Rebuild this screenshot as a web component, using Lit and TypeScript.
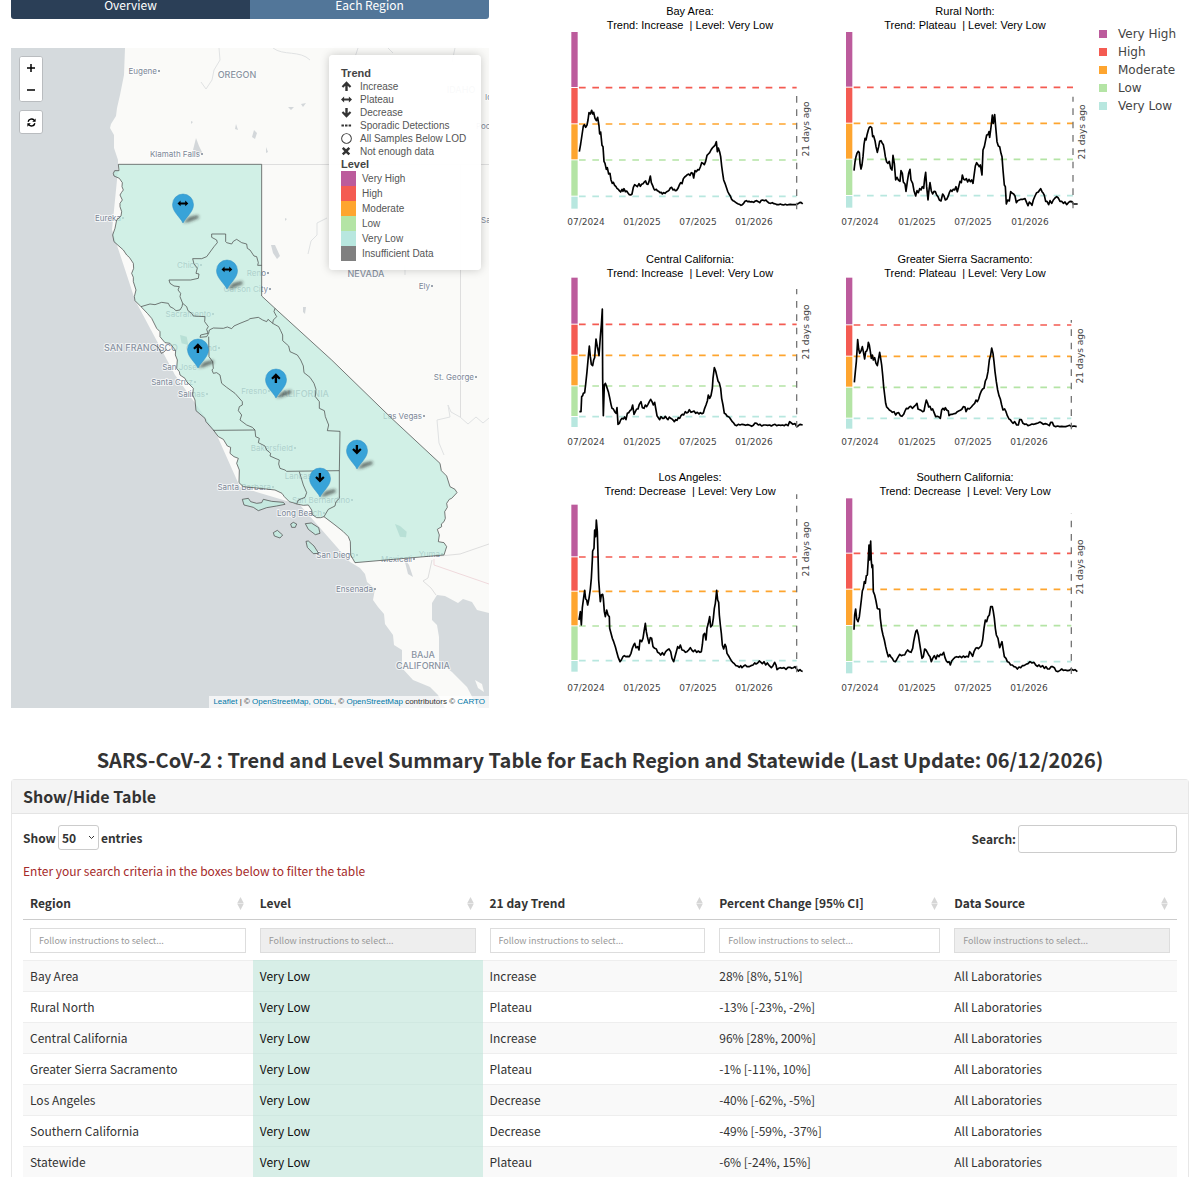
import { LitElement, html, svg, css } from "lit";
import { customElement, property } from "lit/decorators.js";
import { classMap } from "lit/directives/class-map.js";

interface Level {
  name: string;
  color: string;
}

const LEVELS: Level[] = [
  { name: "Very High", color: "#bc5b9c" },
  { name: "High", color: "#f45b52" },
  { name: "Moderate", color: "#fea52f" },
  { name: "Low", color: "#b4e4a5" },
  { name: "Very Low", color: "#b8e7df" },
];

interface Chart {
  title: string;
  trend: string;
  height: number;
  /* Offset of the plot units (a third of a pixel) inside the drawing. */
  dx: number;
  dy: number;
  /* Top, the four thresholds and the bottom of the level bar. */
  bands: number[];
  barX: number;
  lineX: number;
  lineTop: number;
  noteY: number;
  ticksY: number;
  ticks: number[];
  trace: string;
}

const CHARTS: Chart[] = [
  {
    title: "Bay Area", trend: "Increase", height: 200, dx: -5, dy: -32,
    bands: [95, 263, 372, 480, 589, 628], barX: 34, lineX: 710, lineTop: 270, noteY: 388, ticksY: 665,
    ticks: [77, 246, 413, 583],
    trace: "58,455 62,432 66,405 70,378 73,374 77,382 81,375 84,360 87,338 91,342 95,331 98,342 101,337 105,355 109,362 113,352 117,378 119,402 122,396 126,436 129,440 132,484 135,490 139,508 142,503 146,522 150,520 153,540 157,550 160,547 164,556 168,560 171,565 175,568 178,572 182,576 186,568 189,574 192,566 196,575 200,573 204,579 208,584 212,585 216,582 220,562 224,554 228,557 232,560 237,551 241,559 245,553 249,551 253,546 257,543 260,552 264,553 267,545 271,528 274,548 278,557 281,565 284,570 289,568 292,572 296,574 300,578 304,577 307,582 311,578 315,580 319,576 323,574 327,571 331,564 335,562 339,570 343,568 346,572 350,571 354,565 358,555 362,548 366,551 370,536 374,531 378,528 382,524 386,522 390,526 394,518 398,520 401,534 405,512 409,515 413,509 417,510 421,501 425,488 429,490 433,494 437,484 441,466 445,462 449,458 453,450 457,444 461,440 465,436 469,425 472,455 475,444 479,456 482,470 485,498 488,520 491,540 495,550 499,562 503,574 507,582 511,588 515,598 519,602 523,604 527,607 531,610 535,612 539,613 543,616 547,614 551,610 555,604 559,602 563,605 567,604 571,606 576,605 581,607 586,603 590,602 595,605 599,608 604,601 608,600 613,602 618,600 622,605 627,609 632,610 637,608 642,611 647,612 651,614 656,614 661,612 666,614 671,615 676,613 681,615 686,614 691,613 696,614 701,614 706,614 711,613 716,610 720,607 724,608 728,612",
  },
  {
    title: "Rural North", trend: "Plateau", height: 200, dx: -10, dy: -32,
    bands: [95, 262, 370, 478, 587, 625], barX: 48, lineX: 729, lineTop: 290, noteY: 396, ticksY: 665,
    ticks: [91, 262, 430, 601],
    trace: "72,512 75,486 78,470 81,460 85,454 88,458 90,490 93,507 96,495 99,470 102,434 105,415 108,420 111,405 115,390 118,382 121,380 125,383 128,410 131,408 135,422 138,440 142,457 146,440 149,424 153,422 156,428 160,434 163,450 166,470 170,486 174,490 178,484 182,505 186,510 189,466 193,490 197,540 201,532 205,540 210,544 213,512 217,520 220,546 225,552 228,574 232,545 236,520 240,508 243,540 248,550 252,572 257,588 261,572 265,578 269,566 273,570 277,560 281,565 284,536 287,517 290,560 294,600 297,570 300,548 304,573 308,582 312,574 316,575 320,585 324,590 328,600 333,603 338,582 342,588 346,600 350,598 354,590 358,578 362,570 366,574 370,568 374,570 378,560 382,575 386,560 390,544 394,548 397,525 401,538 405,540 409,536 413,546 417,538 421,545 425,540 429,550 433,520 436,498 440,488 444,494 448,500 451,495 456,525 459,450 463,440 466,425 470,405 474,404 477,395 479,412 482,390 485,365 487,345 490,370 494,344 497,380 501,425 505,438 509,440 513,460 516,470 519,510 523,555 526,560 529,612 533,600 538,603 542,575 547,580 551,582 555,588 559,608 563,602 568,600 573,598 579,598 585,596 590,608 594,617 598,606 602,610 606,616 610,600 615,588 620,578 625,576 629,570 632,566 636,575 640,580 643,586 647,604 651,604 656,614 660,602 665,610 670,600 675,594 680,590 685,594 690,604 695,604 700,610 705,606 710,614 715,608 720,604 726,605 730,612 735,612 743,612",
  },
  {
    title: "Central California", trend: "Increase", height: 170, dx: -5, dy: -35,
    bands: [97, 238, 331, 423, 515, 548], barX: 34, lineX: 710, lineTop: 132, noteY: 260, ticksY: 590,
    ticks: [77, 246, 413, 583],
    trace: "58,500 63,500 65,455 68,452 70,445 74,443 77,418 81,380 85,335 88,303 91,335 94,358 98,362 101,345 104,338 108,282 112,305 115,320 117,332 121,275 124,240 127,192 128,400 130,512 133,420 136,415 140,425 145,440 149,458 153,478 156,490 160,492 164,500 168,505 171,488 174,538 178,535 182,525 186,520 190,522 194,516 198,524 202,505 206,503 210,497 214,494 218,480 222,508 226,500 230,492 234,492 238,478 243,470 247,488 252,490 256,480 260,485 264,478 268,470 272,463 276,470 280,480 284,472 288,495 291,512 295,518 299,524 303,515 308,520 312,520 316,514 320,520 324,524 328,516 332,520 336,522 340,526 343,530 347,524 351,526 355,518 359,520 363,512 367,508 371,510 376,500 380,504 384,502 388,494 393,502 397,500 402,498 407,505 412,502 417,507 421,503 426,506 430,504 434,490 438,480 442,468 445,450 449,460 453,452 457,430 459,400 463,368 467,378 471,395 474,408 478,414 482,430 485,460 489,480 493,505 497,507 501,513 505,515 509,518 513,524 517,530 521,534 525,540 530,542 535,538 540,540 546,538 551,539 557,541 563,539 569,541 575,544 580,541 585,534 590,535 595,540 600,538 605,543 611,540 617,540 623,541 629,540 634,543 639,540 645,538 650,542 656,540 662,541 668,540 673,542 678,538 684,542 689,530 694,534 699,538 705,536 710,545 715,542 720,538 728,540",
  },
  {
    title: "Greater Sierra Sacramento", trend: "Plateau", height: 170, dx: -10, dy: -35,
    bands: [97, 240, 334, 427, 520, 553], barX: 48, lineX: 724, lineTop: 225, noteY: 334, ticksY: 590,
    ticks: [91, 260, 428, 597],
    trace: "73,412 76,380 79,350 81,318 83,284 86,312 89,325 93,318 97,305 100,320 104,342 107,320 110,318 113,310 115,292 118,300 121,320 124,340 127,330 130,345 134,338 138,355 142,362 145,345 149,322 152,340 155,360 158,390 161,425 164,450 167,475 170,486 174,490 178,495 183,498 187,502 192,500 197,510 201,504 206,503 211,512 216,514 221,508 225,498 229,490 234,491 238,486 242,484 247,490 252,485 257,480 261,475 264,492 269,494 273,496 278,500 282,498 285,482 289,465 293,475 296,486 300,484 304,495 308,492 312,502 317,515 322,514 327,516 331,520 335,495 339,490 343,495 346,488 350,495 355,498 357,512 362,508 367,508 372,506 377,505 382,500 386,498 391,496 396,492 400,485 405,486 408,500 413,490 418,492 424,486 429,480 434,475 438,465 442,470 446,462 450,448 454,438 458,432 462,430 466,408 470,400 474,380 478,345 482,330 485,309 489,325 492,350 495,380 499,410 503,435 507,452 511,462 515,480 519,495 524,492 528,500 532,512 537,522 541,524 545,530 549,535 554,530 560,540 565,540 569,524 574,524 579,535 584,538 589,537 594,542 600,540 606,537 612,538 618,536 624,534 630,531 635,534 640,538 646,536 652,538 658,542 662,532 667,532 671,542 677,545 683,543 689,545 695,544 701,545 707,545 713,543 719,541 724,545 732,543 740,545",
  },
  {
    title: "Los Angeles", trend: "Decrease", height: 200, dx: -5, dy: -33,
    bands: [118, 276, 379, 483, 587, 622], barX: 34, lineX: 710, lineTop: 88, noteY: 253, ticksY: 668,
    ticks: [77, 246, 413, 583],
    trace: "57,465 61,440 64,480 67,428 70,405 72,390 74,376 77,402 80,405 83,420 87,400 91,372 94,340 97,285 98,258 102,250 104,195 107,215 109,165 112,200 114,270 116,345 119,385 121,410 124,390 128,388 130,400 133,440 136,455 140,435 144,450 148,455 149,490 153,505 157,520 161,530 166,545 170,560 175,578 180,590 184,585 189,575 193,572 198,575 203,574 208,575 213,565 217,550 221,540 224,535 228,548 233,545 237,555 240,525 245,530 249,520 252,500 256,475 259,500 262,515 267,535 271,518 275,520 279,545 284,550 289,552 293,562 298,565 302,570 307,563 312,570 317,560 322,555 327,552 332,560 336,580 341,590 345,575 349,560 353,545 357,550 361,540 366,555 371,556 376,562 381,560 386,555 391,548 396,556 400,560 405,555 410,562 415,558 420,562 424,560 427,540 430,510 434,505 438,525 441,490 445,475 449,455 452,486 457,480 460,460 463,430 466,415 470,376 473,405 476,412 478,450 481,480 484,505 487,540 491,552 495,538 498,545 501,565 506,573 510,580 514,587 518,592 523,596 528,602 533,603 538,607 542,602 546,608 551,603 556,600 561,605 567,605 573,602 579,600 584,594 588,597 593,594 598,588 603,592 607,596 612,590 617,600 622,594 628,602 634,608 639,602 644,592 648,600 651,614 656,610 661,608 666,610 672,608 678,613 684,607 690,607 695,610 700,608 705,605 710,612 715,618 720,614 724,618 728,619",
  },
  {
    title: "Southern California", trend: "Decrease", height: 200, dx: -10, dy: -33,
    bands: [99, 265, 373, 482, 590, 627], barX: 48, lineX: 724, lineTop: 146, noteY: 306, ticksY: 668,
    ticks: [91, 260, 428, 597],
    trace: "72,494 74,450 77,432 80,462 84,470 88,455 91,430 94,405 97,378 100,370 103,350 106,355 109,332 112,330 115,280 117,240 119,285 122,228 124,290 126,308 128,300 130,380 134,390 138,408 142,430 145,432 149,432 151,460 155,492 159,510 163,525 167,545 171,562 175,575 179,569 183,576 187,580 191,588 196,590 200,584 205,575 209,568 214,572 219,570 224,570 229,560 233,555 238,560 243,562 248,550 251,530 255,510 258,498 261,495 265,510 268,530 272,555 276,580 280,575 284,552 288,555 292,562 296,570 300,575 304,590 308,580 313,572 318,582 322,570 327,575 331,568 336,570 341,562 345,578 349,588 353,592 357,590 361,600 365,588 370,582 375,577 380,575 385,577 390,574 395,578 400,573 405,577 410,574 415,576 419,560 423,565 428,574 432,560 437,550 441,548 445,551 450,546 454,542 458,525 462,490 466,465 470,470 474,455 478,450 482,425 487,425 490,440 493,460 496,490 499,510 504,520 509,548 512,540 516,530 519,550 523,575 528,580 532,590 537,592 542,600 547,600 552,605 557,606 562,612 567,606 572,608 577,602 582,602 588,598 594,596 600,590 606,594 612,592 617,600 622,604 627,600 632,606 638,602 643,610 648,605 653,612 658,612 663,605 668,605 673,608 678,618 684,620 690,616 695,612 700,616 706,615 712,617 718,616 724,612 730,616 735,614 742,620",
  },
];

interface Row {
  region: string;
  level: string;
  trend: string;
  change: string;
  source: string;
}

const ROWS: Row[] = [
  { region: "Bay Area", level: "Very Low", trend: "Increase", change: "28% [8%, 51%]", source: "All Laboratories" },
  { region: "Rural North", level: "Very Low", trend: "Plateau", change: "-13% [-23%, -2%]", source: "All Laboratories" },
  { region: "Central California", level: "Very Low", trend: "Increase", change: "96% [28%, 200%]", source: "All Laboratories" },
  { region: "Greater Sierra Sacramento", level: "Very Low", trend: "Plateau", change: "-1% [-11%, 10%]", source: "All Laboratories" },
  { region: "Los Angeles", level: "Very Low", trend: "Decrease", change: "-40% [-62%, -5%]", source: "All Laboratories" },
  { region: "Southern California", level: "Very Low", trend: "Decrease", change: "-49% [-59%, -37%]", source: "All Laboratories" },
  { region: "Statewide", level: "Very Low", trend: "Plateau", change: "-6% [-24%, 15%]", source: "All Laboratories" },
];

const COLUMNS = [
  { name: "Region", locked: false },
  { name: "Level", locked: true },
  { name: "21 day Trend", locked: false },
  { name: "Percent Change [95% CI]", locked: false },
  { name: "Data Source", locked: true },
];

/* Trend glyphs, each drawn in a 12 by 12 box. */
const ARROW_UP = "M6 .4 11.200 5.600 9.600 7.300 7.300 5.200V11H4.700V5.200L2.400 7.300.8 5.600Z";
const ARROW_DOWN = "M6 11.600.8 6.400 2.400 4.700 4.700 6.800V1h2.600v5.800l2.300-2.100L11.200 6.400Z";
const ARROW_BOTH = "M0 6 3.400 2.800V4.900h5.200V2.800L12 6 8.600 9.200V7.100H3.400v2.100Z";
const DOTS = "M.5 5h2.700v2.200H.5ZM4.400 5h2.700v2.200H4.400ZM8.300 5H11v2.200H8.300Z";
const RING = "M6 .2a5.800 5.800 0 1 0 0 11.600A5.800 5.800 0 0 0 6 .2Zm0 1a4.800 4.800 0 1 1 0 9.600 4.800 4.800 0 0 1 0-9.600Z";
const CROSS = "M2.800 1.200 5.500 3.600 8.200 1.200 10 3 7.400 5.600 10 8.200 8.200 10 5.500 7.600 2.800 10 1 8.200 3.600 5.600 1 3Z";

const TRENDS = [
  { name: "Increase", path: ARROW_UP },
  { name: "Plateau", path: ARROW_BOTH },
  { name: "Decrease", path: ARROW_DOWN },
  { name: "Sporadic Detections", path: DOTS },
  { name: "All Samples Below LOD", path: RING },
  { name: "Not enough data", path: CROSS },
];

const PINS = [
  { x: 183, y: 223, path: ARROW_BOTH },
  { x: 227, y: 289, path: ARROW_BOTH },
  { x: 198, y: 368, path: ARROW_UP },
  { x: 276, y: 398, path: ARROW_UP },
  { x: 357, y: 469, path: ARROW_DOWN },
  { x: 320, y: 497, path: ARROW_DOWN },
];

/* City names end at x, next to their dot. */
const CITIES: [string, number, number][] = [
  ["Eugene", 157, 71], ["Klamath Falls", 200, 154], ["Eureka", 121, 218], ["Chico", 199, 265],
  ["Reno", 266, 273], ["Carson City", 268, 289], ["Sacramento", 211, 314], ["Oakland", 217, 348],
  ["San Jose", 197, 367], ["Santa Cruz", 193, 382], ["Salinas", 205, 394], ["Fresno", 267, 391],
  ["Bakersfield", 293, 448], ["Lancaster", 322, 476], ["San Bernardino", 350, 500],
  ["Santa Barbara", 271, 487], ["Long Beach", 322, 513], ["San Diego", 355, 555],
  ["Mexicali", 412, 559], ["Yuma", 440, 554], ["Las Vegas", 422, 416], ["St. George", 474, 377],
  ["Ely", 430, 286], ["Ensenada", 373, 589],
];

const STATES: [string, number, number][] = [
  ["OREGON", 237, 75], ["NEVADA", 366, 274], ["IDAHO", 461, 90], ["CALIFORNIA", 302, 394],
  ["SAN FRANCISCO", 141, 348], ["BAJA", 423, 655], ["CALIFORNIA", 423, 666],
];

/* Names that run off the eastern edge of the map. */
const CLIPPED: [string, number, number][] = [
  ["Idaho Falls", 485, 97], ["Pocatello", 476, 126], ["Salt Lake City", 481, 220],
];

const STATE_OUTLINE =
  "M85 73H515V468L555 505 725 660 905 835 1050 970 1054 992 1070 1008 1080 1040 1095 1048 1101 1058 1085 1075 1078 1078 1070 1090 1072 1102 1064 1115 1066 1135 1062 1145 1054 1152 1055 1160 1042 1168 1048 1185 1045 1205 1062 1208 1070 1220 1062 1245 795 1268 782 1245 781 1205 775 1190 760 1175 735 1155 702 1130 692 1133 680 1133 667 1124 665 1110 655 1095 640 1096 620 1092 598 1085 583 1070 576 1060 555 1050 500 1044 460 1040 447 1028 448 990 440 970 445 955 432 950 420 940 422 922 412 918 400 898 385 890 370 870 348 845 345 835 318 812 315 780 308 765 310 745 290 725 285 715 270 705 268 695 260 685 262 660 256 645 257 632 240 610 225 608 210 590 210 575 200 565 185 535 172 520 153 500 135 482 133 470 138 450 130 425 130 412 125 400 131 385 130 370 118 352 110 345 100 330 72 305 68 285 75 265 80 240 93 228 95 215 90 200 90 190 97 180 90 165 94 158 100 150 96 140 97 128 88 115 72 108 70 100 74 92 87 92Z";

const INNER_BORDERS = [
  "M515 376H503L505 368 500 350 492 348 480 330 472 325 470 312 455 308 440 298 430 304 425 312 410 308 407 305V282H365V292L380 300 382 308 372 320 350 350 335 356H308L312 372 322 384 318 400 327 402 325 415 302 420H237L240 430 252 438 268 440 264 450 272 460 270 470 278 490",
  "M153 500 180 492 195 494 215 487 235 490 240 500 250 505 258 512 270 510 276 500 278 490 290 500 294 512 305 520 310 528 345 530 344 545 355 560 350 568 354 580 332 585 330 592 350 590 356 580 358 570",
  "M358 570 370 564 400 565 412 561 425 566 432 558 450 550 475 540 480 536 505 532 518 540 530 545 534 538 548 550 566 560 572 572 578 585 578 602 596 618 600 635 622 645 632 660 640 678 642 698 660 712 672 730 678 748 676 770 688 785 688 805 703 812 706 830 716 855 712 872 750 874",
  "M548 550 550 540 560 530 552 515 555 505",
  "M750 874 748 992 748 1075 738 1085 735 1098 715 1108 702 1130",
  "M748 992 590 994 585 990 570 985 566 972 568 960 558 956 540 948 542 940 530 930 525 918 505 908 508 895 497 890 495 870 370 871",
  "M495 870 487 862 470 855 450 840 455 825 445 812 448 800 457 795 457 785 435 760 410 742 395 730 390 705 380 698 370 700 366 690 370 685 368 665 357 650 356 590",
  "M628 995 640 1035 650 1058 645 1072 625 1080 620 1092",
];

const ISLANDS = [
  "M457 1078 475 1075 482 1085 500 1090 515 1088 520 1078 545 1084 580 1087 585 1093 560 1098 530 1103 505 1112 490 1102 462 1095Z",
  "M602 1152 610 1147 620 1152 616 1162 605 1162Z",
  "M550 1178 562 1171 578 1185 570 1194 553 1188Z",
  "M646 1151 664 1149 686 1163 690 1180 676 1184 655 1168Z",
  "M648 1204 655 1203 672 1218 686 1240 670 1241 652 1222Z",
];

@customElement("region-chart")
export class RegionChart extends LitElement {
  @property({ attribute: false }) chart!: Chart;

  static styles = css`
    :host {
      display: block;
      min-width: 0;
    }
    .title {
      margin: 0;
      font: 400 11px/14px "Liberation Sans", Arial, sans-serif;
      color: #000;
      text-align: center;
    }
    .detail {
      display: block;
      white-space: pre;
    }
    .plot {
      display: block;
      width: 100%;
      height: auto;
      overflow: visible;
    }
    .tick,
    .note {
      font-family: "DejaVu Sans", Verdana, sans-serif;
      font-size: 9px;
      fill: #444;
      text-anchor: middle;
    }
    .threshold {
      stroke-width: 5;
      stroke-dasharray: 20 20;
    }
    .today {
      stroke: #777;
      stroke-width: 4;
      stroke-dasharray: 20 20;
    }
    .trace {
      fill: none;
      stroke: #000;
      stroke-width: 5;
      stroke-linejoin: round;
    }
  `;

  render() {
    const c = this.chart;
    const dates = ["07/2024", "01/2025", "07/2025", "01/2026"];
    const end = c.bands[5];
    return html`
      <h3 class="title">${c.title}:<span class="detail">Trend: ${c.trend}  | Level: Very Low</span></h3>
      <svg class="plot" viewBox="0 0 250 ${c.height}" role="img" aria-label="${c.title} trend">
        <g transform="translate(${c.dx} ${c.dy}) scale(.33333)">
          ${LEVELS.map((level, i) => svg`
            <rect x=${c.barX} y=${c.bands[i] + 1} width="19" height=${c.bands[i + 1] - c.bands[i] - 3} fill=${level.color}></rect>`)}
          ${LEVELS.slice(1).map((level, i) => svg`
            <line class="threshold" x1=${c.barX + 23} x2=${c.lineX} y1=${c.bands[i + 1]} y2=${c.bands[i + 1]} stroke=${level.color}></line>`)}
          <polyline class="trace" points=${c.trace}></polyline>
          <line class="today" x1=${c.lineX} x2=${c.lineX} y1=${end} y2=${c.lineTop}></line>
        </g>
        ${c.ticks.map((x, i) => svg`
          <text class="tick" x=${Math.round(x / 3) + c.dx} y=${Math.round(c.ticksY / 3) + c.dy + 3}>${dates[i]}</text>`)}
        <text class="note" transform="translate(${Math.round(c.lineX / 3) + c.dx + 12} ${Math.round(c.noteY / 3) + c.dy}) rotate(-90)">21 days ago</text>
      </svg>
    `;
  }
}

@customElement("region-map")
export class RegionMap extends LitElement {
  static styles = css`
    :host {
      display: block;
      position: relative;
      font-family: "Liberation Sans", Arial, sans-serif;
      background: #d5dadd;
    }
    .canvas {
      display: block;
      width: 100%;
      height: auto;
    }
    .city,
    .clipped,
    .state {
      font-family: Inter, "Open Sans", sans-serif;
      stroke: #fff;
      stroke-opacity: 0.7;
      stroke-width: 2;
      paint-order: stroke;
      stroke-linejoin: round;
    }
    .city,
    .clipped {
      font-size: 8px;
      fill: #7c8797;
    }
    .city {
      text-anchor: end;
    }
    .state {
      font-size: 9px;
      font-weight: 500;
      fill: #8a94a2;
      text-anchor: middle;
    }
    .controls {
      position: absolute;
      top: 8px;
      left: 8px;
      display: flex;
      flex-direction: column;
      gap: 8px;
    }
    .group {
      display: flex;
      flex-direction: column;
      border: 1px solid #b9bcbf;
      border-radius: 3px;
      background: #fff;
      overflow: hidden;
    }
    .control {
      display: flex;
      align-items: center;
      justify-content: center;
      width: 22px;
      height: 22px;
      padding: 0;
      border: 0;
      background: #fff;
      color: #000;
    }
    .legend {
      position: absolute;
      top: 7px;
      right: 8px;
      box-sizing: border-box;
      width: 152px;
      padding: 12px 12px 9px;
      border-radius: 4px;
      background: rgba(255, 255, 255, 0.95);
      box-shadow: 0 0 10px rgba(0, 0, 0, 0.2);
      line-height: 13px;
      color: #555;
    }
    .heading {
      margin: 0;
      font-size: 11px;
      line-height: 13px;
      color: #444;
    }
    .list {
      margin: 0;
      padding: 0;
      list-style: none;
    }
    .entry {
      display: flex;
      align-items: center;
      gap: 8px;
      font-size: 10px;
      white-space: nowrap;
    }
    .entry.tall {
      height: 15px;
      gap: 6px;
    }
    .glyph {
      width: 11px;
      height: 11px;
      fill: #333;
    }
    .swatch {
      width: 15px;
      height: 15px;
    }
    .credits {
      position: absolute;
      right: 0;
      bottom: 0;
      padding: 0 4px;
      background: rgba(255, 255, 255, 0.7);
      font-size: 8px;
      line-height: 12px;
      color: #333;
      white-space: nowrap;
    }
    .credits a {
      color: #0078a8;
      text-decoration: none;
    }
  `;

  render() {
    return html`
      <svg class="canvas" viewBox="11 48 478 660" role="img" aria-label="Map of California regions">
        <defs>
          <filter id="soft" x="-50%" y="-80%" width="200%" height="260%"><feGaussianBlur stdDeviation="1.4"></feGaussianBlur></filter>
        </defs>
        <path fill="#fafaf8" d="M125 48 124 75 120 95 117 108 116 116 111 124 110 128 114 135 114 148 118 160 118 170 112 230 135 300 175 375 215 431 240 487 300 505 350 562 360 568 365 574 367 582 375 589 373 600 378 607 384 614 385 624 393 635 394 645 402 650 402 668 413 680 430 687 438 695 445 708H478L467 687 452 672 439 662V637L437 625 432 620V603L437 595 445 596 458 603 463 599 472 602 477 610 489 613V48Z"></path>
        <path fill="#fafaf8" d="M475 680 482 684 484 692 478 688Z"></path>
        <g fill="none" stroke="#dedede">
          <path d="M262 164.500H489M460.500 164V417"></path>
          <path d="M219 48 220 60 214 70 212 80 206 89 201 82M273 48C283 56 300 50 310 60M354 60 358 48M388 48 393 53M455 48 452 62M327 218 317 223 317 235 311 241 308 254M405 265V275M460 417 451 412 448 405 450 417 437 420 439 443 444 455M460 417 468 424 476 417 483 423 489 418" stroke="#e0e2e3"></path>
          <path d="M432 560 428 578 423 581 431 588 436 595M440 556 460 554 489 544"></path>
          <path d="M434 559V565L489 584" stroke="#efd9dc"></path>
        </g>
        <g fill="#d3d7da">
          <path d="M196 138 199 146 202 152 198 156 193 150ZM254 130 257 133 255 139 252 137ZM236 124 238 130 235 129ZM288 107 294 107 291 110ZM301 104 306 103 303 107ZM271 245 275 245 280 256 277 259 273 253ZM285 218 287 219 285 221ZM303 307 306 307 305 314 303 312ZM191 121 193 122 191 124ZM404 558 409 565 413 577 408 574ZM266 147 268 152 266 153Z"></path>
        </g>
        ${CITIES.map(([name, x, y]) => svg`
          <text class="city" x=${x} y=${y + 3}>${name}</text>
          <circle cx=${x + 2} cy=${y} r="1" fill="#7c8797"></circle>`)}
        ${CLIPPED.map(([name, x, y]) => svg`<text class="clipped" x=${x} y=${y + 3} aria-label=${name}>${name.slice(0, 3)}</text>`)}
        ${STATES.map(([name, x, y]) => svg`<text class="state" x=${x} y=${y + 3}>${name}</text>`)}
        <g transform="translate(90 140) scale(.33333)" stroke="#444" stroke-opacity=".7" stroke-width="3" stroke-linejoin="round" fill="none">
          <path d=${STATE_OUTLINE} fill="#c0ecdf" fill-opacity=".72"></path>
          ${ISLANDS.map((d) => svg`<path d=${d} fill="#c0ecdf" fill-opacity=".76"></path>`)}
          <path d="M196 616 205 622 214 640 222 636 229 628"></path>
          ${INNER_BORDERS.map((d) => svg`<path d=${d}></path>`)}
          <path d="M1015 1152 1030 1158 1050 1175 1048 1192 1030 1190ZM370 585 390 590 395 615 375 610Z" transform="translate(-100 0)" fill="#9fcfc6" fill-opacity=".5" stroke="none"></path>
        </g>
        ${PINS.map((p) => svg`
          <g transform="translate(${p.x} ${p.y})">
            <path d="M0 0 6-6 15-8 16-5 6-1Z" fill="#222" fill-opacity=".6" filter="url(#soft)"></path>
            <path d="M0 0C-3-6-10.500-11-10.500-18.500a10.500 10.500 0 0 1 21 0C10.500-11 3-6 0 0Z" fill="#38a3d8" stroke="#2e8fc4" stroke-width=".5"></path>
            <path transform="translate(-5.500 -25) scale(.9)" d=${p.path}></path>
          </g>`)}
      </svg>
      <div class="controls">
        <div class="group">
          <button class="control" type="button" aria-label="Zoom in">
            <svg width="10" height="10" viewBox="0 0 10 10"><path d="M5 1v8M1 5h8" stroke="#000" stroke-width="1.500"></path></svg>
          </button>
          <button class="control" type="button" aria-label="Zoom out">
            <svg width="10" height="10" viewBox="0 0 10 10"><path d="M1 5h8" stroke="#000" stroke-width="1.300"></path></svg>
          </button>
        </div>
        <div class="group">
          <button class="control" type="button" aria-label="Reset view">
            <svg width="9" height="9" viewBox="0 0 12 12" fill="none" stroke="#000" stroke-width="1.800">
              <path d="M1.500 5A4.600 4.600 0 0 1 9.500 3M10.500 7A4.600 4.600 0 0 1 2.500 9"></path>
              <path d="M11.500.5V5H7ZM.5 11.500V7H5Z" fill="#000" stroke="none"></path>
            </svg>
          </button>
        </div>
      </div>
      <section class="legend" aria-label="Legend">
        <h4 class="heading">Trend</h4>
        <ul class="list">
          ${TRENDS.map((t) => html`
            <li class="entry"><svg class="glyph" viewBox="0 0 12 12" aria-hidden="true"><path d=${t.path}></path></svg>${t.name}</li>`)}
        </ul>
        <h4 class="heading">Level</h4>
        <ul class="list">
          ${[...LEVELS, { name: "Insufficient Data", color: "#808080" }].map((l) => html`
            <li class="entry tall"><span class="swatch" style="background:${l.color}"></span>${l.name}</li>`)}
        </ul>
      </section>
      <div class="credits">
        <a href="#leaflet">Leaflet</a> | © <a href="#osm">OpenStreetMap</a><a href="#odbl">, ODbL</a>, © <a href="#osm">OpenStreetMap</a> contributors © <a href="#carto">CARTO</a>
      </div>
    `;
  }
}

@customElement("summary-table")
export class SummaryTable extends LitElement {
  static styles = css`
    :host {
      display: block;
      border: 1px solid #e7e7e7;
      border-radius: 4px 4px 0 0;
      border-bottom: 0;
      font-family: "Noto Sans CJK SC", "Open Sans", sans-serif;
      font-size: 12px;
      line-height: 20px;
      color: #333;
    }
    .header {
      margin: 0;
      padding: 0 11px;
      border-bottom: 1px solid #e4e4e4;
      background: #f4f4f4;
      font-size: 16px;
      font-weight: 700;
      line-height: 33px;
    }
    .body {
      padding: 11px 11px 0;
    }
    .tools {
      display: flex;
      justify-content: space-between;
      align-items: flex-start;
      font-weight: 700;
    }
    .tool {
      display: flex;
      align-items: center;
      gap: 2px;
    }
    .length,
    .search {
      box-sizing: border-box;
      border: 1px solid #ccc;
      border-radius: 3px;
      background: #fff;
      font: inherit;
      color: inherit;
    }
    .picker {
      position: relative;
      display: flex;
    }
    .length {
      appearance: none;
      width: 41px;
      height: 25px;
      padding: 0 3px;
    }
    .chevron {
      position: absolute;
      right: 4px;
      top: 9px;
      pointer-events: none;
    }
    .search {
      width: 159px;
      height: 28px;
      padding: 0 4px;
    }
    .hint {
      margin: 8px 0 6px;
      color: #a52a2a;
    }
    .grid {
      width: 100%;
      border-collapse: separate;
      border-spacing: 0;
      table-layout: fixed;
    }
    .head,
    .filter-cell,
    .cell {
      box-sizing: border-box;
      padding: 0 7px;
    }
    .wide {
      width: 235px;
    }
    .head {
      height: 33px;
      border-bottom: 1px solid #ccc;
      text-align: left;
    }
    .sort {
      display: flex;
      align-items: center;
      justify-content: space-between;
      width: 100%;
      padding: 0 2px 0 0;
      border: 0;
      background: none;
      font: inherit;
      color: inherit;
      cursor: pointer;
    }
    .filter-cell {
      height: 40px;
    }
    .filter {
      box-sizing: border-box;
      display: block;
      width: 100%;
      height: 25px;
      padding: 0 8px;
      border: 1px solid #ddd;
      background: #fff;
      font: inherit;
      font-size: 9px;
    }
    .filter::placeholder {
      color: #999;
      opacity: 1;
    }
    .filter:disabled {
      background: #eee;
    }
    .cell {
      height: 31px;
      border-top: 1px solid #eee;
    }
    .row:nth-child(odd) {
      background: #f9f9f9;
    }
    .very-low {
      background: #d7eee7;
      border-top-color: #d0e8e1;
      color: #111;
    }
  `;

  render() {
    return html`
      <h2 class="header">Show/Hide Table</h2>
      <div class="body">
        <div class="tools">
          <div class="tool">
            <label for="length">Show</label>
            <span class="picker">
              <select class="length" id="length"><option>50</option><option>100</option></select>
              <svg class="chevron" width="7" height="7" viewBox="0 0 7 7" aria-hidden="true"><path d="M1 2 3.500 4.500 6 2" fill="none" stroke="#333"></path></svg>
            </span>
            <label for="length">entries</label>
          </div>
          <div class="tool">
            <label for="search">Search:</label>
            <input class="search" id="search" type="search" />
          </div>
        </div>
        <p class="hint">Enter your search criteria in the boxes below to filter the table</p>
        <table class="grid">
          <thead>
            <tr>
              ${COLUMNS.map((c, i) => html`
                <th class=${classMap({ head: true, wide: i === 3 })} scope="col">
                  <button class="sort" type="button">
                    ${c.name}
                    <svg width="7" height="13" viewBox="0 0 7 13" fill="#d6d6d6" aria-hidden="true"><path d="M3.500 0 6.800 6.200H.2ZM.2 6.800H6.800L3.500 13Z"></path></svg>
                  </button>
                </th>`)}
            </tr>
            <tr>
              ${COLUMNS.map((c) => html`
                <td class="filter-cell">
                  <input class="filter" type="text" aria-label="Filter ${c.name}" placeholder="Follow instructions to select..." ?disabled=${c.locked} />
                </td>`)}
            </tr>
          </thead>
          <tbody>
            ${ROWS.map((r) => html`
              <tr class="row">
                <td class="cell">${r.region}</td>
                <td class="cell very-low">${r.level}</td>
                <td class="cell">${r.trend}</td>
                <td class="cell">${r.change}</td>
                <td class="cell">${r.source}</td>
              </tr>`)}
          </tbody>
        </table>
      </div>
    `;
  }
}

@customElement("app-root")
export class AppRoot extends LitElement {
  static styles = css`
    :host {
      display: block;
      padding: 0 11px;
      background: #fff;
      color: #333;
      font-family: "Noto Sans CJK SC", "Open Sans", sans-serif;
    }
    .top {
      display: grid;
      grid-template-columns: 478fr 624fr;
      gap: 76px;
      align-items: start;
    }
    .tabs {
      display: grid;
      grid-template-columns: 1fr 1fr;
      margin-bottom: 29px;
      border-radius: 0 0 3px 3px;
      overflow: hidden;
    }
    .tab {
      padding: 0 0 9px;
      border: 0;
      background: #527699;
      color: #fff;
      font: inherit;
      font-size: 12px;
      line-height: 10px;
    }
    .tab.active {
      background: #2b3f57;
    }
    .charts {
      display: grid;
      grid-template-columns: 525fr 90fr;
      gap: 9px;
      padding-top: 4px;
    }
    .plots {
      display: grid;
      grid-template-columns: 1fr 1fr;
      gap: 20px 25px;
    }
    .levels {
      margin: 0;
      padding: 21px 0 0;
      list-style: none;
      font: 400 12px/18px "DejaVu Sans", Verdana, sans-serif;
      color: #444;
    }
    .level {
      display: flex;
      align-items: center;
      gap: 11px;
      white-space: nowrap;
    }
    .mark {
      width: 8px;
      height: 8px;
    }
    .title {
      margin: 34px 0 0;
      padding-bottom: 2px;
      font-size: 20px;
      font-weight: 700;
      line-height: 35px;
      text-align: center;
    }
  `;

  render() {
    return html`
      <div class="top">
        <div>
          <nav class="tabs" aria-label="Views">
            <button class="tab active" type="button">Overview</button>
            <button class="tab" type="button">Each Region</button>
          </nav>
          <region-map></region-map>
        </div>
        <div class="charts">
          <div class="plots">
            ${CHARTS.map((c) => html`<region-chart .chart=${c}></region-chart>`)}
          </div>
          <ul class="levels">
            ${LEVELS.map((l) => html`<li class="level"><span class="mark" style="background:${l.color}"></span>${l.name}</li>`)}
          </ul>
        </div>
      </div>
      <h1 class="title">SARS-CoV-2 : Trend and Level Summary Table for Each Region and Statewide (Last Update: 06/12/2026)</h1>
      <summary-table></summary-table>
    `;
  }
}
